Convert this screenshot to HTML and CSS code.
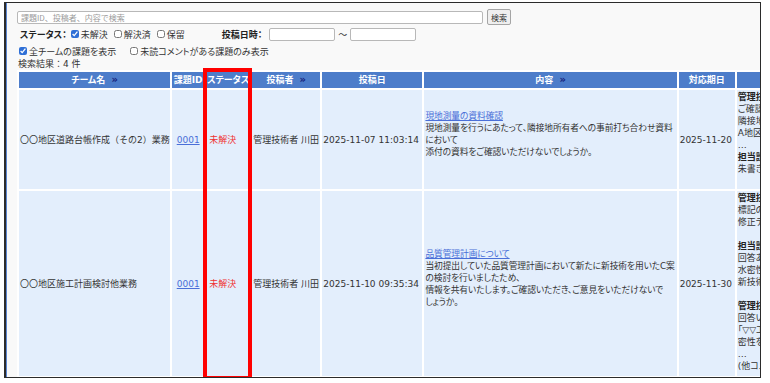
FILE: index.html
```html
<!DOCTYPE html>
<html lang="ja">
<head>
  <meta charset="UTF-8" />
  <meta name="viewport" content="width=device-width, initial-scale=1.0"/>
  <title>課題一覧</title>
  <link rel="stylesheet" href="styles.css">
</head>
<body>

<div class="frame">
  <div class="toolbar">
    <div class="search-row">
      <input class="search-box" type="text" placeholder="課題ID、投稿者、内容で検索">
      <button class="search-btn">検索</button>
    </div>

    <div class="filter-row">
      <span class="label">ステータス：</span>
      <label class="check"><input type="checkbox" checked>未解決</label>
      <label class="check"><input type="checkbox">解決済</label>
      <label class="check"><input type="checkbox">保留</label>
      <span class="label date-label">投稿日時：</span>
      <input class="date-box" type="text">
      <span class="tilde">～</span>
      <input class="date-box" type="text">
    </div>

    <div class="option-row">
      <label class="check"><input type="checkbox" checked>全チームの課題を表示</label>
      <label class="check unread"><input type="checkbox">未読コメントがある課題のみ表示</label>
    </div>

    <div class="result-count">検索結果：4 件</div>
  </div>

  <table class="issues">
    <colgroup>
      <col class="c-team">
      <col class="c-id">
      <col class="c-status">
      <col class="c-author">
      <col class="c-date">
      <col class="c-body">
      <col class="c-due">
      <col class="c-comment">
    </colgroup>
    <thead>
      <tr>
        <th>チーム名 <span class="sort">»</span></th>
        <th>課題ID</th>
        <th>ステータス</th>
        <th>投稿者 <span class="sort">»</span></th>
        <th>投稿日</th>
        <th>内容 <span class="sort">»</span></th>
        <th>対応期日</th>
        <th>コメント</th>
      </tr>
    </thead>
    <tbody>
      <tr class="row-a">
        <td class="team">〇〇地区道路台帳作成（その2）業務</td>
        <td class="center"><a href="#">0001</a></td>
        <td class="status">未解決</td>
        <td>管理技術者 川田</td>
        <td>2025-11-07 11:03:14</td>
        <td class="body">
          <a href="#">現地測量の資料確認</a><br>
          現地測量を行うにあたって、隣接地所有者への事前打ち合わせ資料<br>
          において<br>
          添付の資料をご確認いただけないでしょうか。<br>&nbsp;
        </td>
        <td>2025-11-20</td>
        <td class="comments">
          <b>管理技術者 川田</b><br>
          ご確認ありがとうございます。<br>
          隣接地所有者との打ち合わせ資料は<br>
          A地区の資料を添付しております。<br>
          …<br>
          <b>担当設計者 佐藤</b><br>
          朱書きで修正した箇所を確認しました。
        </td>
      </tr>
      <tr class="row-b">
        <td class="team">〇〇地区施工計画検討他業務</td>
        <td class="center"><a href="#">0001</a></td>
        <td class="status">未解決</td>
        <td>管理技術者 川田</td>
        <td>2025-11-10 09:35:34</td>
        <td class="body">
          <a href="#">品質管理計画について</a><br>
          当初提出していた品質管理計画において新たに新技術を用いたC案<br>
          の検討を行いましたため、<br>
          情報を共有いたします。ご確認いただき、ご意見をいただけないで<br>
          しょうか。<br>&nbsp;
        </td>
        <td>2025-11-30</td>
        <td class="comments">
          <b>管理技術者 川田</b><br>
          標記の件、承知しました。<br>
          修正データを添付いたします。<br>
          <br>
          <b>担当設計者 佐藤</b><br>
          回答ありがとうございます。<br>
          水密性について確認しました。<br>
          新技術の採用について検討します。<br>
          <br>
          <b>管理技術者 川田</b><br>
          回答いただきありがとうございます。<br>
          「▽▽工法」について<br>
          密性を確認した上で採用します。<br>
          …<br>
          (他コメント 3件)
        </td>
      </tr>
      <tr class="row-c">
        <td class="team">〇〇地区橋梁点検業務</td>
        <td class="center"><a href="#">0002</a></td>
        <td class="status">未解決</td>
        <td>管理技術者 川田</td>
        <td>2025-11-12 14:20:05</td>
        <td class="body">提出資料について</td>
        <td>2025-12-05</td>
        <td class="comments"><b>担当設計者 佐藤</b><br>提出いたします。</td>
      </tr>
    </tbody>
  </table>

  <div class="highlight"></div>
</div>

</body>
</html>
```

FILE: styles.css
```css
body {
  margin: 0;
  background-color: #ffffff;
  font-family: 'DejaVu Sans', 'Noto Sans CJK JP', sans-serif;
  font-size: 9px;
  font-feature-settings: "palt";
  color: #333333;
}

.frame {
  position: relative;
  margin: 2px 0 0 4px;
  width: 757px;
  height: 376px;
  box-sizing: border-box;
  border: 1px solid #2b2b2b;
  border-left-width: 2px;
  background-color: #f9f9f9;
  box-shadow: inset 1px 0 0 #5a85d0;
  overflow: hidden;
}

.toolbar {
  padding: 6px 0 0 11px;
}

.search-row {
  display: flex;
  align-items: center;
  gap: 4px;
  height: 16px;
}

.search-box {
  width: 466px;
  height: 13px;
  box-sizing: border-box;
  padding: 0 3px;
  border: 1px solid #b8b8b8;
  border-radius: 2px;
  background-color: #fff;
  font-family: 'Noto Sans CJK JP', sans-serif;
  font-size: 8px;
}

.search-box::placeholder {
  color: #9a9a9a;
}

.search-btn {
  width: 24px;
  height: 16px;
  padding: 0;
  border: 1px solid #a5a5a5;
  border-radius: 2px;
  background-color: #efefef;
  font-family: 'Noto Sans CJK JP', sans-serif;
  font-size: 8px;
  color: #333;
}

.filter-row {
  display: flex;
  align-items: center;
  height: 14px;
  margin-top: 2px;
  padding-left: 3px;
}

.label {
  font-weight: bold;
  color: #222;
  margin-right: 4px;
}

.check {
  display: flex;
  align-items: center;
  margin-right: 6px;
  color: #333;
}

.check input {
  width: 8px;
  height: 8px;
  margin: 0 2px 0 0;
  accent-color: #2f6fd6;
}

.date-label {
  margin-left: 31px;
  margin-right: 7px;
}

.date-box {
  width: 66px;
  height: 13px;
  box-sizing: border-box;
  border: 1px solid #b8b8b8;
  border-radius: 2px;
  background-color: #fff;
}

.tilde {
  margin: 0 3px;
}

.option-row {
  display: flex;
  align-items: center;
  height: 14px;
  margin-top: 3px;
  padding-left: 2px;
}

.unread {
  margin-left: 8px;
}

.result-count {
  height: 12px;
  line-height: 12px;
  padding-left: 1px;
  font-feature-settings: normal;
}

.issues {
  margin-left: 11px;
  width: 922px;
  table-layout: fixed;
  border-collapse: separate;
  border-spacing: 2px;
  background-color: #fff;
}

.c-team { width: 151px; }
.c-id { width: 32px; }
.c-status { width: 44px; }
.c-author { width: 68px; }
.c-date { width: 100px; }
.c-body { width: 252px; }
.c-due { width: 56px; }
.c-comment { width: 200px; }

th {
  height: 15px;
  padding: 0;
  background-color: #4d7dca;
  color: #fff;
  font-weight: bold;
  line-height: 15px;
  text-align: center;
  white-space: nowrap;
  overflow: hidden;
}

.sort {
  color: #16237c;
  font-size: 10px;
  margin-left: 3px;
}

td {
  padding: 0 1px;
  background-color: #e3eefc;
  line-height: 12px;
  vertical-align: middle;
  white-space: nowrap;
  overflow: hidden;
}

.team {
  font-feature-settings: normal;
}

.body {
  font-size: 8.75px;
  letter-spacing: -0.1px;
}

.row-a td {
  height: 98px;
}

.row-b td {
  height: 184px;
}

.row-c td {
  height: 40px;
}

.center {
  text-align: center;
}

a {
  color: #4a6fd8;
  text-decoration: underline;
}

.status {
  color: #f03030;
  padding-left: 3px;
}

.comments {
  vertical-align: top;
  padding-top: 1px;
}

.comments b {
  color: #222;
}

.highlight {
  position: absolute;
  left: 197px;
  top: 65px;
  width: 49px;
  height: 312px;
  box-sizing: border-box;
  border: 4px solid #ff0000;
}
```
